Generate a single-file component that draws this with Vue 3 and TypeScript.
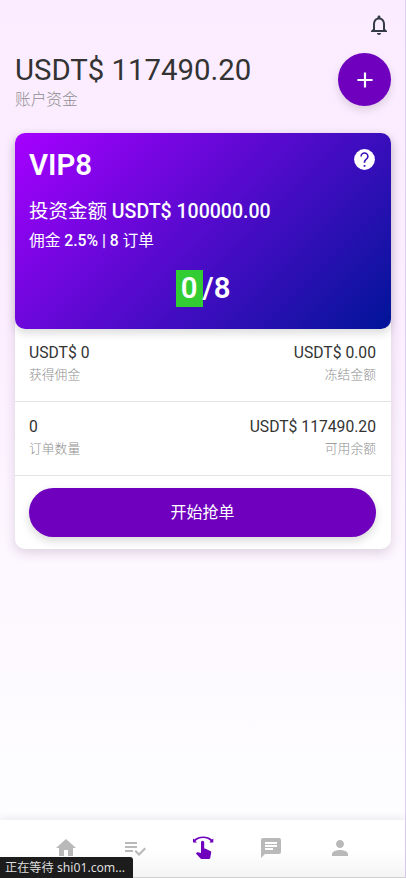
<script setup lang="ts">
interface Cell {
  value: string
  label: string
}

const rows: Cell[][] = [
  [
    { value: 'USDT$ 0', label: '获得佣金' },
    { value: 'USDT$ 0.00', label: '冻结金额' },
  ],
  [
    { value: '0', label: '订单数量' },
    { value: 'USDT$ 117490.20', label: '可用余额' },
  ],
]

const tabs: { name: string; path: string; active?: boolean }[] = [
  { name: 'home', path: 'M10 20v-6h4v6h5v-8h3L12 3 2 12h3v8z' },
  {
    name: 'orders',
    path: 'M14 10H2v2h12v-2zm0-4H2v2h12V6zM2 16h8v-2H2v2zm19.5-4.500L23 13l-6.990 7-4.510-4.500L13 14l3.010 3 5.490-5.500z',
  },
  {
    name: 'grab',
    active: true,
    path: 'M2 2.500l1.300 1.100C5.500 1.700 8.600.500 12.200.500s6.600 1.200 8.700 3.100l1.400-1.100v4h-4l1.300-1.500C17.800 3.100 15.300 2.100 12.200 2.100S6.500 3.100 4.500 5L6 6.500H2zM10 6.300a1.600 1.600 0 0 1 3.200 0v6.200l1.500.300 5 2.500q.700.400.500 1.200l-1 5.400q-.200 1.100-1.300 1.100h-7.100q-.700 0-1.200-.500L4.900 17.600l1-1.100q.500-.500 1.200-.300l2.900.700z',
  },
  {
    name: 'messages',
    path: 'M20 2H4c-1.100 0-1.990.900-1.990 2L2 22l4-4h14c1.100 0 2-.900 2-2V4c0-1.100-.900-2-2-2zM6 9h12v2H6V9zm8 5H6v-2h8v2zm4-6H6V6h12v2z',
  },
  {
    name: 'profile',
    path: 'M12 12c2.210 0 4-1.790 4-4s-1.790-4-4-4-4 1.790-4 4 1.790 4 4 4zm0 2c-2.670 0-8 1.340-8 4v2h16v-2c0-2.660-5.330-4-8-4z',
  },
]
</script>

<template>
  <div class="page">
    <header class="topbar">
      <svg class="bell" viewBox="0 0 24 24">
        <path d="M12 22c1.100 0 2-.900 2-2h-4c0 1.100.900 2 2 2zm6-6v-5c0-3.070-1.630-5.640-4.500-6.320V4c0-.830-.670-1.500-1.500-1.500s-1.500.670-1.500 1.500v.680C7.640 5.360 6 7.920 6 11v5l-2 2v1h16v-1l-2-2zm-2 1H8v-6c0-2.480 1.510-4.500 4-4.500s4 2.020 4 4.500v6z" />
      </svg>
    </header>

    <section class="balance">
      <div>
        <div class="amount">USDT$ 117490.20</div>
        <div class="caption">账户资金</div>
      </div>
      <button class="add" aria-label="+">
        <svg viewBox="0 0 24 24"><path d="M19 13h-6v6h-2v-6H5v-2h6V5h2v6h6v2z" /></svg>
      </button>
    </section>

    <main class="card">
      <section class="vip">
        <div class="vip-head">
          <h1>VIP8</h1>
          <svg viewBox="0 0 24 24">
            <circle class="help-disc" cx="12" cy="12" r="10" />
            <path class="help-mark" d="M11.200 17.200h1.700v1.800h-1.700zM12 5a4 4 0 0 0-4 4h1.500a2.500 2.500 0 0 1 5 0c0 2-3.300 2.600-3.300 6h1.600c0-2.800 3.200-3.200 3.200-6a4 4 0 0 0-4-4z" />
          </svg>
        </div>
        <div class="invest"><span class="zh">投资金额</span> USDT$ 100000.00</div>
        <div class="rate"><span class="zh">佣金</span> 2.5% | 8 <span class="zh">订单</span></div>
        <div class="progress"><span class="done">0</span>/8</div>
      </section>
      <div v-for="(row, i) in rows" :key="i" class="row">
        <div v-for="cell in row" :key="cell.label" class="cell">
          <div class="value">{{ cell.value }}</div>
          <div class="label">{{ cell.label }}</div>
        </div>
      </div>
      <div class="action"><button class="start">开始抢单</button></div>
    </main>

    <nav class="tabs">
      <svg v-for="tab in tabs" :key="tab.name" viewBox="0 0 24 24" :class="{ active: tab.active }">
        <path :d="tab.path" />
      </svg>
    </nav>
    <div class="status">正在等待 shi01.com...</div>
  </div>
</template>

<style>
body {
  margin: 0;
  overflow: hidden;
}
</style>

<style scoped>
* {
  box-sizing: border-box;
}
.page {
  position: relative;
  height: 878px;
  display: flex;
  flex-direction: column;
  background: linear-gradient(180deg, #fbecff 0, #fceeff 320px, #fdf7ff 560px, #fdfdff 800px);
  border-right: 1px solid #dccff7;
  font-family: Roboto, 'Noto Sans CJK SC', sans-serif;
  color: #333;
}
svg {
  display: block;
  fill: currentColor;
}
.topbar {
  height: 53px;
  padding: 13px 14px 0;
  display: flex;
  justify-content: flex-end;
}
.bell {
  width: 24px;
  height: 24px;
  color: #343a46;
}
.balance {
  height: 80px;
  padding: 0 14px 0 15px;
  display: flex;
  justify-content: space-between;
  align-items: flex-start;
}
.amount {
  font-size: 29.350px;
  line-height: 34px;
  white-space: nowrap;
}
.caption {
  margin-top: 1px;
  font-size: 15.700px;
  line-height: 23px;
  font-weight: 300;
  color: #8f8f8f;
}
button {
  border: 0;
  padding: 0;
  font-family: inherit;
}
.add {
  width: 53px;
  height: 53px;
  border-radius: 50%;
  background: #6e00be;
  color: #fff;
  display: flex;
  align-items: center;
  justify-content: center;
  box-shadow: 0 4px 8px rgba(0, 0, 0, 0.13);
}
.add svg {
  width: 26px;
  height: 26px;
}
.card {
  width: 376px;
  height: 416px;
  margin-left: 15px;
  background: #fff;
  border-radius: 10px;
  box-shadow: 0 4px 12px rgba(60, 20, 70, 0.16);
}
.vip {
  height: 196px;
  padding: 16px 14px 0;
  border-radius: 10px;
  color: #fff;
  background: linear-gradient(135deg, #a600ff, #001598);
  box-shadow: 0 4px 10px rgba(0, 0, 0, 0.15);
}
.vip-head {
  display: flex;
  justify-content: space-between;
  align-items: flex-start;
  height: 46px;
}
.vip-head h1 {
  margin: 0;
  font-size: 29.350px;
  line-height: 32px;
  font-weight: 600;
}
.vip-head svg {
  width: 25px;
  height: 25px;
  margin-top: -2px;
}
.help-mark {
  fill: #3b10bb;
}
.zh {
  font-weight: 400;
}
.invest {
  padding-top: 1px;
  font-size: 19.500px;
  line-height: 32px;
  font-weight: 500;
}
.rate {
  font-size: 15.700px;
  line-height: 26px;
  font-weight: 500;
}
.progress {
  margin-top: 16px;
  display: flex;
  justify-content: center;
  font-size: 29.350px;
  line-height: 37px;
  font-weight: 600;
}
.done {
  width: 27px;
  text-align: center;
  background: #32cd32;
}
.row {
  height: 74px;
  padding: 13px 15px 0 14px;
  display: flex;
  justify-content: space-between;
  border-bottom: 1px solid #e4e4e4;
}
.row:nth-child(2) {
  height: 73px;
}
.row:nth-child(3) {
  padding-top: 14px;
}
.cell:last-child {
  text-align: right;
}
.value {
  font-size: 15.700px;
  line-height: 21px;
}
.label {
  font-size: 12.800px;
  line-height: 23px;
  font-weight: 300;
  color: #8f8f8f;
}
.action {
  padding: 12px 15px 0 14px;
}
.start {
  display: block;
  width: 100%;
  height: 49px;
  padding-bottom: 4px;
  border-radius: 25px;
  background: #6e00be;
  color: #fff;
  font-size: 16px;
  box-shadow: 0 4px 10px rgba(0, 0, 0, 0.15);
}
.tabs {
  height: 58px;
  margin-top: auto;
  padding: 0 31px 2px 32px;
  display: flex;
  justify-content: space-around;
  align-items: center;
  color: #b9b9b9;
  background: linear-gradient(#fff 0, #fff 30px, #f4f4f4);
  box-shadow: 0 -2px 8px rgba(0, 0, 0, 0.08);
  border-bottom: 1px solid #d0d0d0;
}
.tabs svg {
  width: 24px;
  height: 24px;
}
.tabs .active {
  color: #6e00be;
}
.status {
  position: absolute;
  left: 0;
  bottom: 0;
  width: 133px;
  height: 21px;
  padding-left: 5px;
  border-top-right-radius: 3px;
  background: #1c1c1c;
  color: #dedede;
  font: 12.200px/21px 'Noto Sans', 'Noto Sans CJK SC', sans-serif;
  white-space: nowrap;
}
</style>
